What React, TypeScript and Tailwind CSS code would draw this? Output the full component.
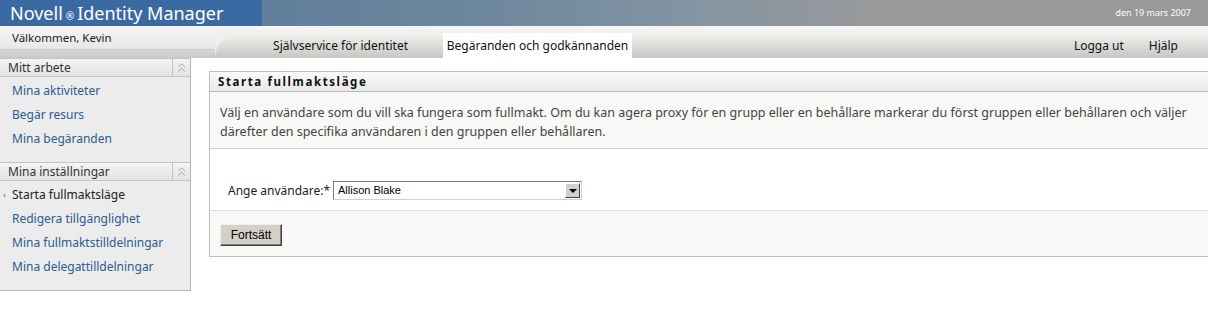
import { ChevronsUp } from "lucide-react";

const workLinks = ["Mina aktiviteter", "Begär resurs", "Mina begäranden"];
const settingsLinks = ["Starta fullmaktsläge", "Redigera tillgänglighet", "Mina fullmaktstilldelningar", "Mina delegattilldelningar"];

function SideHeader({ title }: { title: string }) {
  return (
    <div className="flex h-[19px] items-stretch border-y border-[#c4c4c4] bg-linear-to-b from-[#f4f4f4] to-[#e4e4e4]">
      <div className="flex flex-1 items-center pl-[8px] text-[12px] text-[#333]">{title}</div>
      <div className="flex w-[18px] items-center justify-center border-l border-[#c4c4c4] text-[#8a8a8a]">
        <ChevronsUp size={15} strokeWidth={1.3} />
      </div>
    </div>
  );
}

function SideGroup({ title, links, active }: { title: string; links: string[]; active?: string }) {
  return (
    <div>
      <SideHeader title={title} />
      <div className="pt-[2px] pb-[11px]">
        {links.map((link) => (
          <div key={link} className="flex h-[24px] items-center text-[12px]">
            {link === active ? (
              <span className="flex items-center text-[#222]">
                <span className="w-[12px] pl-[3px] text-[9px] text-[#666]">›</span>
                {link}
              </span>
            ) : (
              <span className="pl-[12px] text-[#2b5b92]">{link}</span>
            )}
          </div>
        ))}
      </div>
    </div>
  );
}

export default function App() {
  return (
    <div className="h-[312px] w-[1208px] overflow-hidden bg-white font-['Noto_Sans',sans-serif]">
      {/* banner */}
      <div className="flex h-[26px]">
        <div className="flex w-[262px] items-center bg-[#3b6aa3] pl-[10px] text-[18px] leading-none text-white">
          Novell<span className="mx-[3px] mt-[6px] text-[10px]">®</span> Identity Manager
        </div>
        <div className="w-[620px] bg-[linear-gradient(90deg,#5f7f9c_0%,#6d879d_35%,#8495a3_70%,#999999_100%)]" />
        <div className="flex flex-1 items-center justify-end bg-[#999999] pr-[17px] text-[9px] text-white">
          den 19 mars 2007
        </div>
      </div>

      {/* welcome + tabs */}
      <div className="flex h-[32px] bg-[#eeeeee]">
        <div className="flex w-[215px] flex-col">
          <div className="flex h-[24px] items-center border-b border-[#c8c8c8] bg-linear-to-b from-[#f6f6f6] to-[#e8e8e8] pl-[12px] text-[11.5px] text-[#222]">
            Välkommen, Kevin
          </div>
          <div className="flex-1 bg-linear-to-b from-[#d6d6d3] to-[#cacac6]" />
        </div>
        <div className="flex flex-1 flex-col">
          <div className="h-[7px] bg-linear-to-b from-[#f6f6f6] to-[#f0f0f0]" />
          <div className="flex flex-1 items-stretch rounded-tl-[30px] bg-linear-to-b from-[#f3f3f1] to-[#c6c6c2] text-[12px] text-[#111]">
            <div className="flex w-[228px] items-center justify-end pr-[35px]">Självservice för identitet</div>
            <div className="flex w-[189px] items-center justify-center bg-white">Begäranden och godkännanden</div>
            <div className="flex-1" />
            <div className="flex items-center gap-[25px] pr-[30px]">
              <span>Logga ut</span>
              <span>Hjälp</span>
            </div>
          </div>
        </div>
      </div>

      {/* body */}
      <div className="flex items-start">
        <div className="w-[191px] border-r border-b border-[#b4b4b4] bg-[#ececec]">
          <SideGroup title="Mitt arbete" links={workLinks} />
          <SideGroup title="Mina inställningar" links={settingsLinks} active="Starta fullmaktsläge" />
        </div>

        <div className="ml-[18px] mt-[13px] flex-1 border-y border-l border-[#bdbdbd]">
          <div className="flex h-[20px] items-center border-b border-[#bdbdbd] bg-linear-to-b from-[#fafafa] to-[#e8e8e8] pl-[8px] text-[11.5px] font-bold tracking-[1.6px] text-[#111]">
            Starta fullmaktsläge
          </div>
          <div className="h-[57px] border-b border-[#cfcfcf] bg-[#f8f8f6] px-[10px] pt-[11px] text-[12.5px] leading-[19px] whitespace-nowrap text-[#444]">
            Välj en användare som du vill ska fungera som fullmakt. Om du kan agera proxy för en grupp eller en behållare markerar du först gruppen eller behållaren och väljer
            <br />
            därefter den specifika användaren i den gruppen eller behållaren.
          </div>
          <div className="flex h-[62px] items-end border-b border-[#dddddd] bg-white pb-[10px] pl-[18px]">
            <span className="w-[105px] text-[12px] text-[#222]">Ange användare:*</span>
            <div className="flex h-[19px] w-[249px] items-stretch border border-t-[#7a7a7a] border-l-[#7a7a7a] border-r-[#d0d0d0] border-b-[#d0d0d0] bg-white">
              <span className="flex flex-1 items-center pl-[4px] font-['Liberation_Sans',Arial,sans-serif] text-[11px] text-black">
                Allison Blake
              </span>
              <span className="m-[1px] flex w-[15px] items-center justify-center border border-t-white border-l-white border-r-[#404040] border-b-[#404040] bg-[#d4d0c8]">
                <span className="h-0 w-0 border-x-[4px] border-t-[4px] border-x-transparent border-t-black" />
              </span>
            </div>
          </div>
          <div className="h-[45px] bg-[#f8f8f6] pt-[10px] pl-[10px]">
            <button className="h-[22px] w-[62px] border border-t-[#f0f0f0] border-l-[#f0f0f0] border-r-[#404040] border-b-[#404040] bg-[#d4d0c8] font-['Liberation_Sans',Arial,sans-serif] text-[12px] text-black shadow-[inset_-1px_-1px_0_#808080]">
              Fortsätt
            </button>
          </div>
        </div>
      </div>
    </div>
  );
}
